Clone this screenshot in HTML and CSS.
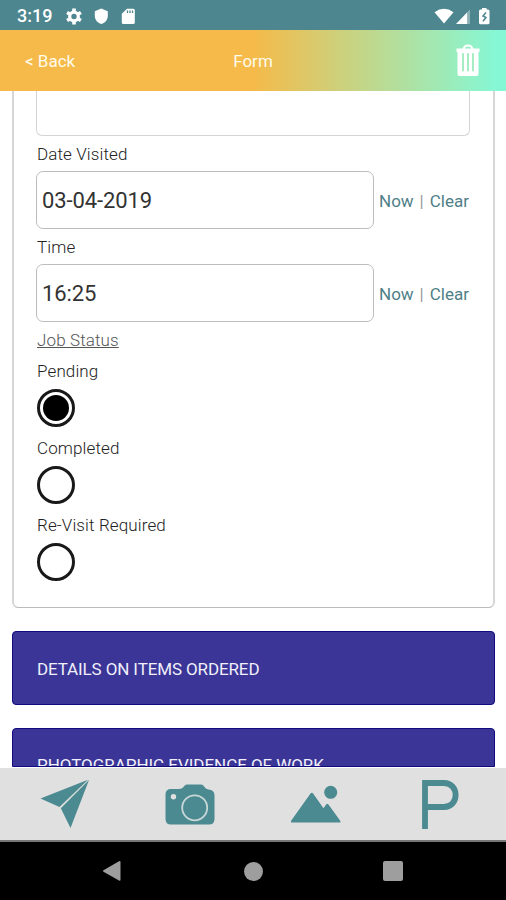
FILE: index.html
```html
<!DOCTYPE html>
<html lang="en">
<head>
<meta charset="utf-8">
<title>Form</title>
<link rel="stylesheet" href="styles.css">
</head>
<body>
<div class="status">
  <span class="clock">3:19</span>
  <svg class="status-left" width="72" height="20" viewBox="0 0 72 20">
    <g fill="none" stroke="#fff"><circle cx="9" cy="10.500" r="4.300" stroke-width="3.200"/><path d="M9 2.500v3M9 15.500v3M2.100 6.500l2.600 1.500M13.300 13l2.600 1.500M2.100 14.500l2.600-1.500M13.300 8l2.600-1.500" stroke-width="3.600"/></g>
    <path fill="#fff" d="M36.300 2.500l6.500 2.800v4.600c0 3.600-2.600 6.800-6.500 8-3.900-1.200-6.500-4.400-6.500-8V5.300z"/>
    <path fill="#fff" d="M62 2.700h6.200q1.600 0 1.600 1.600v12.200q0 1.600-1.600 1.600h-9.800q-1.600 0-1.600-1.600V7.700z"/>
    <path stroke="#4d868e" stroke-width="1.300" d="M62.500 4.500v2.500M65 4.500v2.500M67.500 4.500v2.500"/>
  </svg>
  <svg class="status-right" width="60" height="20" viewBox="0 0 60 20">
    <path fill="#fff" d="M.5 6.200Q10 -.5 19.500 6.200L10 17.500z"/>
    <path fill="#fff" d="M22 18L33.500 6V18z"/><path fill="#8cb2b7" d="M33.500 6l2.500-2.500V18h-2.500z"/>
    <path fill="#fff" d="M48 2h4.500V3.500H54q1.500 0 1.500 1.500v11.800q0 1.500-1.500 1.500h-7.500q-1.500 0-1.500-1.500V5q0-1.500 1.500-1.500H48z"/>
    <path fill="none" stroke="#4d868e" stroke-width="1.500" d="M52 6.500l-3 3.500 3 1.500-3 3.800"/>
  </svg>
</div>
<header class="header">
  <span class="back">&lt; Back</span>
  <span class="title">Form</span>
  <svg class="trash" width="24" height="33" viewBox="0 0 24 33">
    <path fill="none" stroke="#fff" stroke-width="2" d="M7.500 5.500Q8 1.500 12 1.500t4.500 4"/>
    <path fill="#fff" d="M.5 4.500h23V8h-1v22q0 2-2 2h-17q-2 0-2-2V8h-1z"/>
    <path stroke="#a6edc3" stroke-width="2" stroke-linecap="round" d="M7 10v16.500M12 10v16.500M17 10v16.500"/>
  </svg>
</header>
<main class="content">
  <section class="card">
    <div class="notes"></div>
    <div class="label">Date Visited</div>
    <div class="row"><div class="input date">03-04-2019</div><div class="links"><a>Now</a><i>|</i><a>Clear</a></div></div>
    <div class="label">Time</div>
    <div class="row"><div class="input time">16:25</div><div class="links"><a>Now</a><i>|</i><a>Clear</a></div></div>
    <div class="label group">Job Status</div>
    <div class="label option pending">Pending</div>
    <div class="radio checked"></div>
    <div class="label option">Completed</div>
    <div class="radio"></div>
    <div class="label option">Re-Visit Required</div>
    <div class="radio"></div>
  </section>
  <section class="panel"><span>DETAILS ON ITEMS ORDERED</span></section>
  <section class="panel cut"><span>PHOTOGRAPHIC EVIDENCE OF WORK</span></section>
</main>
<footer class="tools">
  <svg width="50" height="50" viewBox="0 0 50 50"><g fill="#4a8a90"><path d="M.5 19.500L48 .8 19.500 28z"/><path d="M49 1L30.500 49 20.800 29.300z"/></g></svg>
  <svg width="50" height="50" viewBox="0 0 50 50"><path fill="#4a8a90" d="M6 10h8q3 0 4.500-2l1-1.300Q20.500 5.500 22.500 5.500h13q2 0 3 1.200l1 1.300Q41 10 43.500 10.500q6 .5 6 6V40q0 5.500-5.500 5.500H6Q.5 45.500.5 40V15.500Q.5 10 6 10z"/><circle cx="8.500" cy="17.800" r="2.700" fill="#e0e0e0"/><circle cx="29.700" cy="28.800" r="12.500" fill="none" stroke="#c8d8d9" stroke-width="1.800"/></svg>
  <svg width="50" height="50" viewBox="0 0 50 50"><g fill="#4a8a90"><path d="M.3 43.500q-1-1 0-2L19.500 14.500q1.300-1.500 2.600 0L32.500 29.200l2.800-4q1-1 2 0L49 41.500q1 1.500 0 2z"/><circle cx="39.700" cy="13.300" r="6.500"/></g></svg>
  <svg width="50" height="50" viewBox="0 0 50 50"><path fill="none" stroke="#4a8a90" stroke-width="5.800" d="M9 50V4h19c15.500 0 15.500 24 0 24H9"/></svg>
</footer>
<nav class="nav">
  <svg width="20" height="22" viewBox="0 0 20 22"><path fill="#9e9e9e" d="M.5 10.300L16 1.200q1.500-.8 1.500 1v17.300q0 1.800-1.500 1L.5 11.700q-1-.7 0-1.400z"/></svg>
  <b class="home"></b>
  <b class="recent"></b>
</nav>
</body>
</html>
```

FILE: styles.css
```css
* { box-sizing: border-box; }
body { margin: 0; width: 506px; height: 900px; overflow: hidden; display: flex; flex-direction: column; background: #fff; font-family: Roboto, sans-serif; font-size: 17px; color: #333; }
.status { height: 30px; flex: none; display: flex; align-items: center; padding: 1px 12px 0 17px; background: #4d868e; color: #fff; }
.clock { font-size: 18px; font-weight: 500; width: 48px; }
.status-left { display: block; }
.status-right { margin-left: auto; }
.header { height: 61px; flex: none; display: grid; grid-template-columns: 1fr auto 1fr; align-items: center; padding: 0 26px 0 25px; color: #fffbea; background: linear-gradient(90deg, #f5ba49 0, #f5ba49 50%, #86f7d5 98%); }
.title { margin-left: 1px; }
.trash { justify-self: end; }
.content { height: 677px; flex: none; overflow: hidden; padding: 0 11px 0 12px; }
.card { height: 517px; border: 2px solid #d6d6d6; border-top: 0; border-bottom: 1.5px solid #bbb; border-radius: 0 0 6px 6px; padding: 0 24px 0 22px; }
.notes { height: 44.500px; width: 434px; border: 1.5px solid #d4d4d4; border-top: 0; border-radius: 0 0 6px 6px; }
.label { height: 36px; line-height: 37px; font-weight: 300; color: #222; padding-left: 1px; letter-spacing: .12px; white-space: nowrap; }
.row { display: flex; align-items: center; height: 57px; }
.input { width: 338px; height: 58px; flex: none; border: 1.500px solid #bdbdbd; border-radius: 7px; padding-left: 5px; line-height: 57px; font-size: 22px; letter-spacing: -.12px; color: #333; }
.links { display: flex; gap: 6px; margin-left: 5px; padding-top: 1px; color: #508087; }
.links i { font-style: normal; color: #999; }
.group { text-decoration: underline; color: #555; }
.option { height: 30px; line-height: 30px; margin-top: 6px; margin-bottom: 3px; }
.pending { margin-top: -2px; }
.radio { width: 38px; height: 38px; border: 3px solid #191919; border-radius: 50%; margin-left: 1px; }
.checked { background: #000; background-clip: content-box; padding: 3px; }
.panel { margin-top: 23px; height: 74px; display: flex; align-items: center; padding: 1px 0 0 24px; border: 1px solid #110b80; border-radius: 4px; background: #3a3596; color: #f0effa; letter-spacing: -.12px; }
.cut { height: 39px; align-items: flex-start; padding-top: 26px; overflow: hidden; border-radius: 4px 4px 0 0; line-height: 20px; letter-spacing: -.04px; }
.tools { height: 74px; flex: none; background: #e0e0e0; border-bottom: 2px solid #777; display: flex; justify-content: space-between; padding: 11px 40px 0 40px; }
.nav { height: 58px; flex: none; background: #000; display: flex; align-items: center; justify-content: space-between; padding: 0 103px 0 103px; }
.home { width: 19px; height: 19px; border-radius: 50%; background: #9e9e9e; }
.recent { width: 20px; height: 20px; border-radius: 2px; background: #9e9e9e; }
```
